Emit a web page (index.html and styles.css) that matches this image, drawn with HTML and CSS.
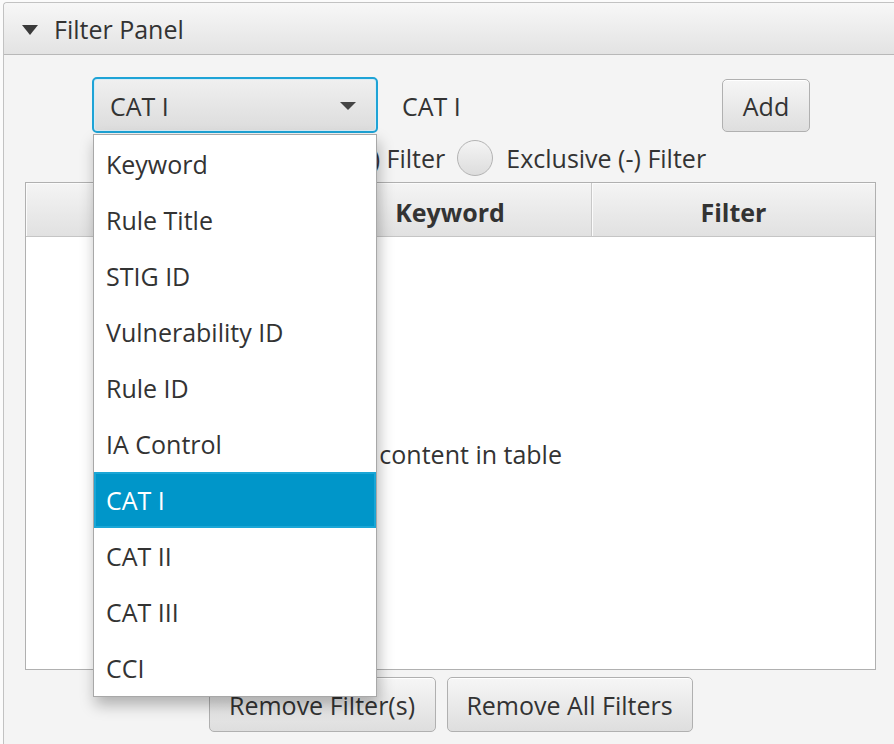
FILE: index.html
```html
<!DOCTYPE html>
<html>
<head>
<meta charset="utf-8">
<link rel="stylesheet" href="styles.css">
</head>
<body>
<div class="pane">
  <div class="title">
    <span class="tri"></span>
    <span class="title-text">Filter Panel</span>
  </div>
  <div class="content">
    <div class="top-row">
      <div class="combo-wrap">
        <div class="combo">
          <span class="combo-text">CAT I</span>
          <span class="combo-arrow"></span>
        </div>
        <ul class="popup">
          <li class="item">Keyword</li>
          <li class="item">Rule Title</li>
          <li class="item">STIG ID</li>
          <li class="item">Vulnerability ID</li>
          <li class="item">Rule ID</li>
          <li class="item">IA Control</li>
          <li class="item selected">CAT I</li>
          <li class="item">CAT II</li>
          <li class="item">CAT III</li>
          <li class="item">CCI</li>
        </ul>
      </div>
      <span class="value-label">CAT I</span>
      <button class="btn add">Add</button>
    </div>
    <div class="radio-row">
      <label class="radio"><span class="circle checked"></span><span>Inclusive (+) Filter</span></label>
      <label class="radio"><span class="circle"></span><span>Exclusive (-) Filter</span></label>
    </div>
    <div class="table">
      <div class="thead">
        <div class="th"></div>
        <div class="th">Keyword</div>
        <div class="th">Filter</div>
      </div>
      <div class="tbody">
        <span class="placeholder">No content in table</span>
      </div>
    </div>
    <div class="button-row">
      <button class="btn rm1">Remove Filter(s)</button>
      <button class="btn rm2">Remove All Filters</button>
    </div>
  </div>
</div>
</body>
</html>
```

FILE: styles.css
```css
html, body {
  margin: 0;
  padding: 0;
  background: #fbfbfb;
  overflow: hidden;
}
body {
  font-family: "Open Sans", "Noto Sans", sans-serif;
  font-size: 25px;
  color: #333333;
  width: 894px;
  height: 744px;
}
.pane {
  margin: 2px 0 0 3px;
  width: 896px;
  height: 760px;
  border-left: 1px solid #c2c2c2;
  border-top: 1px solid #c2c2c2;
  border-top-left-radius: 4px;
  box-sizing: border-box;
  display: flex;
  flex-direction: column;
}
.title {
  height: 52px;
  box-sizing: border-box;
  background: linear-gradient(#f7f7f7, #e3e3e3);
  border-bottom: 1px solid #b8b8b8;
  display: flex;
  align-items: center;
  padding-left: 18px;
  border-top-left-radius: 4px;
}
.tri {
  width: 0;
  height: 0;
  border-left: 8px solid transparent;
  border-right: 8px solid transparent;
  border-top: 10px solid #3a3a3a;
  margin-right: 16px;
  margin-top: 2px;
}
.title-text {
  line-height: 1;
  margin-top: 2px;
}
.content {
  flex: 1;
  background: #f4f4f4;
  padding-top: 22px;
  width: 893px;
}
.top-row {
  display: flex;
  align-items: center;
  height: 56px;
  padding-left: 88px;
}
.combo-wrap {
  position: relative;
  width: 286px;
  height: 56px;
}
.combo {
  box-sizing: border-box;
  width: 286px;
  height: 56px;
  border: 2px solid #1ea3d6;
  border-radius: 5px;
  background: linear-gradient(#f0f0f0, #dcdcdc);
  box-shadow: inset 0 0 0 1px #d7ecf5;
  display: flex;
  align-items: center;
  padding-left: 16px;
  padding-right: 20px;
}
.combo-text {
  flex: 1;
  line-height: 1;
  margin-top: 2px;
}
.combo-arrow {
  width: 0;
  height: 0;
  border-left: 8px solid transparent;
  border-right: 8px solid transparent;
  border-top: 8px solid #444;
  margin-top: 1px;
}
.popup {
  position: absolute;
  left: 1px;
  top: 57px;
  width: 284px;
  margin: 0;
  padding: 1px 0 0;
  list-style: none;
  background: #ffffff;
  border: 1px solid #a8a8a8;
  box-sizing: border-box;
  box-shadow: 2px 8px 14px rgba(0, 0, 0, 0.28);
  z-index: 10;
}
.item {
  height: 56px;
  line-height: 56px;
  padding-left: 12px;
  white-space: nowrap;
}
.item.selected {
  background: #0096c9;
  color: #ffffff;
  box-shadow: inset 0 0 0 2px #1aa6d6;
}
.value-label {
  width: 320px;
  margin-left: 24px;
  line-height: 1;
  margin-top: 2px;
}
.btn {
  font-family: inherit;
  font-size: 25px;
  color: #333333;
  background: linear-gradient(#f6f6f6, #dedede);
  border: 1px solid #b0b0b0;
  border-radius: 5px;
  box-shadow: inset 0 1px 0 #ffffff;
  padding: 2px 0 0;
  margin: 0;
  line-height: 1;
}
.add {
  width: 88px;
  height: 53px;
}
.radio-row {
  display: flex;
  justify-content: center;
  align-items: center;
  gap: 12px;
  height: 36px;
  margin-top: 7px;
}
.radio {
  display: flex;
  align-items: center;
  gap: 13px;
}
.circle {
  width: 34px;
  height: 34px;
  border-radius: 50%;
  border: 1px solid #b3b3b3;
  background: linear-gradient(#f4f4f4, #dddddd);
  position: relative;
}
.circle.checked::after {
  content: "";
  position: absolute;
  left: 11px;
  top: 11px;
  width: 12px;
  height: 12px;
  border-radius: 50%;
  background: #333;
}
.table {
  margin: 6px 0 0 21px;
  width: 851px;
  height: 488px;
  box-sizing: border-box;
  border: 1px solid #b0b0b0;
  background: #ffffff;
  display: flex;
  flex-direction: column;
}
.thead {
  height: 54px;
  box-sizing: border-box;
  display: grid;
  grid-template-columns: 283px 283px 1fr;
  background: linear-gradient(#f4f4f4, #e1e1e1);
  border-bottom: 1px solid #c5c5c5;
}
.th {
  display: flex;
  align-items: center;
  justify-content: center;
  font-weight: bold;
  border-right: 1px solid #c8c8c8;
  box-shadow: inset 1px 1px 0 #fbfbfb;
  line-height: 1;
  padding-top: 6px;
}
.th:last-child {
  border-right: none;
}
.tbody {
  flex: 1;
  display: flex;
  align-items: center;
  justify-content: center;
}
.placeholder {
  line-height: 1;
  margin-top: 3px;
}
.button-row {
  display: flex;
  justify-content: center;
  gap: 11px;
  margin-top: 7px;
}
.rm1 {
  width: 227px;
  height: 55px;
}
.rm2 {
  width: 246px;
  height: 55px;
}
```
